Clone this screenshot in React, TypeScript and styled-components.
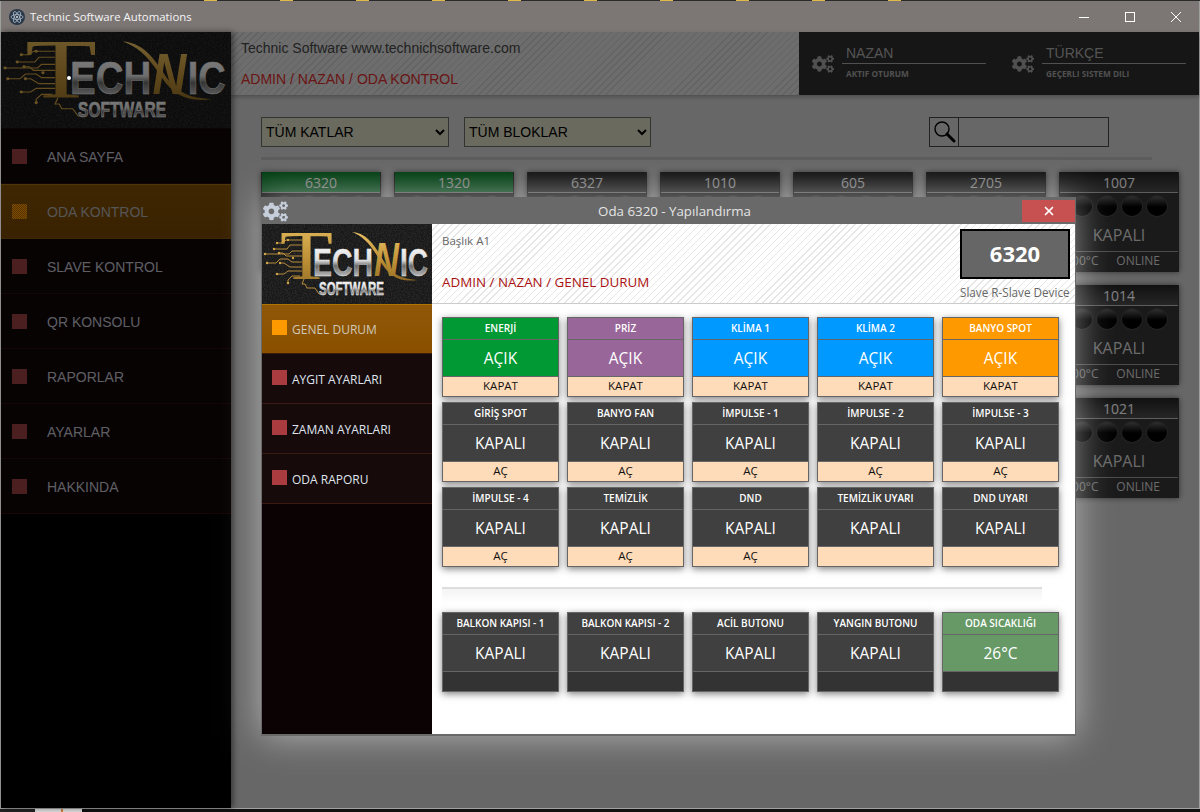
import styled, { createGlobalStyle } from "styled-components";
import { FaCogs } from "react-icons/fa";
import { X } from "lucide-react";

type Tone = "green" | "purple" | "blue" | "orange" | "dark" | "temp";

const toneColors: Record<Tone, string> = {
  green: "#009933",
  purple: "#996699",
  blue: "#0099ff",
  orange: "#ff9900",
  dark: "#404040",
  temp: "#669966",
};

const navItems = ["ANA SAYFA", "ODA KONTROL", "SLAVE KONTROL", "QR KONSOLU", "RAPORLAR", "AYARLAR", "HAKKINDA"];
const modalItems = ["GENEL DURUM", "AYGIT AYARLARI", "ZAMAN AYARLARI", "ODA RAPORU"];

const rooms = [
  { no: "6320", on: true },
  { no: "1320", on: true },
  { no: "6327" },
  { no: "1010" },
  { no: "605" },
  { no: "2705" },
  { no: "1007" },
  { no: "1014", last: true },
  { no: "1021", last: true },
];

const controls: { title: string; value: string; action?: string; tone: Tone }[] = [
  { title: "ENERJİ", value: "AÇIK", action: "KAPAT", tone: "green" },
  { title: "PRİZ", value: "AÇIK", action: "KAPAT", tone: "purple" },
  { title: "KLİMA 1", value: "AÇIK", action: "KAPAT", tone: "blue" },
  { title: "KLİMA 2", value: "AÇIK", action: "KAPAT", tone: "blue" },
  { title: "BANYO SPOT", value: "AÇIK", action: "KAPAT", tone: "orange" },
  { title: "GİRİŞ SPOT", value: "KAPALI", action: "AÇ", tone: "dark" },
  { title: "BANYO FAN", value: "KAPALI", action: "AÇ", tone: "dark" },
  { title: "İMPULSE - 1", value: "KAPALI", action: "AÇ", tone: "dark" },
  { title: "İMPULSE - 2", value: "KAPALI", action: "AÇ", tone: "dark" },
  { title: "İMPULSE - 3", value: "KAPALI", action: "AÇ", tone: "dark" },
  { title: "İMPULSE - 4", value: "KAPALI", action: "AÇ", tone: "dark" },
  { title: "TEMİZLİK", value: "KAPALI", action: "AÇ", tone: "dark" },
  { title: "DND", value: "KAPALI", action: "AÇ", tone: "dark" },
  { title: "TEMİZLİK UYARI", value: "KAPALI", action: "", tone: "dark" },
  { title: "DND UYARI", value: "KAPALI", action: "", tone: "dark" },
];

const sensors: { title: string; value: string; tone: Tone }[] = [
  { title: "BALKON KAPISI - 1", value: "KAPALI", tone: "dark" },
  { title: "BALKON KAPISI - 2", value: "KAPALI", tone: "dark" },
  { title: "ACİL BUTONU", value: "KAPALI", tone: "dark" },
  { title: "YANGIN BUTONU", value: "KAPALI", tone: "dark" },
  { title: "ODA SICAKLIĞI", value: "26°C", tone: "temp" },
];

const circuit = [
  "M40 16H24l-3 3h-6",
  "M40 21H28l-3 4H12",
  "M40 27H30l-3 3H3",
  "M40 32H24l-3-3h-4",
  "M40 38H30l-4-3H18l-4 4H5",
  "M40 43H28l-6-4h-4",
  "M40 47H26l-4 3h-7",
  "M38 52H30l-4 4v3",
  "M42 55l-2 5h3l2 4h8l4 6h6",
];

const dots: [number, number][] = [
  [15, 19], [12, 25], [3, 30], [17, 29], [5, 39], [18, 39], [15, 50], [26, 59], [26, 16], [31, 34],
];

const Logo = () => (
  <LogoSvg viewBox="0 0 170 80" preserveAspectRatio="none" role="img" aria-label="Technic Software">
    <defs>
      <filter id="leather" x="0" y="0" width="100%" height="100%">
        <feTurbulence type="fractalNoise" baseFrequency="0.75" numOctaves="2" seed="4" />
        <feColorMatrix values="0 0 0 0 1  0 0 0 0 1  0 0 0 0 1  0.9 0 0 0 -0.32" />
      </filter>
      <linearGradient id="gold" x1="0" y1="0" x2="0" y2="1">
        <stop offset="0" stopColor="#eac163" />
        <stop offset="0.55" stopColor="#bd8f36" />
        <stop offset="1" stopColor="#8d6a24" />
      </linearGradient>
      <linearGradient id="chrome" x1="0" y1="0" x2="0" y2="1">
        <stop offset="0" stopColor="#ffffff" />
        <stop offset="0.45" stopColor="#dcdcdc" />
        <stop offset="0.58" stopColor="#6a6a6a" />
        <stop offset="1" stopColor="#f6f6f6" />
      </linearGradient>
    </defs>
    <rect width="170" height="80" fill="#181818" />
    <rect width="170" height="80" filter="url(#leather)" opacity="0.22" />
    <g fill="none" stroke="#c79a3f" strokeWidth="0.9">
      {circuit.map((d) => (
        <path key={d} d={d} />
      ))}
    </g>
    {dots.map(([cx, cy]) => (
      <circle key={`${cx}-${cy}`} cx={cx} cy={cy} r="1.2" fill="#d3a748" />
    ))}
    <text x="18" y="55" fontFamily="'Liberation Serif', serif" fontSize="70" textLength="53" lengthAdjust="spacingAndGlyphs" fill="url(#gold)">
      T
    </text>
    <text x="51" y="52" fontFamily="'Liberation Sans', sans-serif" fontWeight="700" fontSize="39" textLength="60" lengthAdjust="spacingAndGlyphs" fill="url(#chrome)" stroke="#e8e8e8" strokeWidth="0.4">
      ECH
    </text>
    <path d="M90 8c14 1 22 12 30 26s16 21 36 22c-20 3-30-5-39-21S100 12 90 8z" fill="url(#gold)" />
    <text x="112" y="52" fontFamily="'Liberation Sans', sans-serif" fontStyle="italic" fontWeight="700" fontSize="48" textLength="25" lengthAdjust="spacingAndGlyphs" fill="url(#gold)">
      N
    </text>
    <text x="138" y="52" fontFamily="'Liberation Sans', sans-serif" fontWeight="700" fontSize="39" textLength="28" lengthAdjust="spacingAndGlyphs" fill="url(#chrome)" stroke="#e8e8e8" strokeWidth="0.4">
      IC
    </text>
    <text x="57" y="71" fontFamily="'Liberation Sans', sans-serif" fontWeight="700" fontSize="18" textLength="65" lengthAdjust="spacingAndGlyphs" fill="url(#chrome)" stroke="#f0f0f0" strokeWidth="0.5">
      SOFTWARE
    </text>
  </LogoSvg>
);

const AppIcon = () => (
  <svg width="16" height="16" viewBox="0 0 16 16">
    <circle cx="8" cy="8" r="8" fill="#2b3848" />
    <g fill="none" stroke="#b8c8d8" strokeWidth="0.7">
      <ellipse cx="8" cy="8" rx="6" ry="2.4" />
      <ellipse cx="8" cy="8" rx="6" ry="2.4" transform="rotate(60 8 8)" />
      <ellipse cx="8" cy="8" rx="6" ry="2.4" transform="rotate(120 8 8)" />
    </g>
    <circle cx="8" cy="8" r="1" fill="#d8e4f0" />
  </svg>
);

const SearchIcon = () => (
  <svg width="26" height="26" viewBox="0 0 26 26">
    <circle cx="11" cy="10" r="7" fill="none" stroke="#000" strokeWidth="1.4" />
    <path d="M16 15l7 7" stroke="#000" strokeWidth="3" strokeLinecap="round" />
  </svg>
);

const App = () => {
  return (
    <Page>
      <GlobalStyle />
      <DesktopTop />
      <Window>
        <TitleBar>
          <AppIcon />
          <AppTitle>Technic Software Automations</AppTitle>
          <WindowButtons>
            <WindowButton aria-label="Küçült">
              <svg width="10" height="10" viewBox="0 0 10 10">
                <path d="M0 5.5h10" stroke="#fff" />
              </svg>
            </WindowButton>
            <WindowButton aria-label="Büyüt">
              <svg width="10" height="10" viewBox="0 0 10 10">
                <rect x="0.5" y="0.5" width="9" height="9" fill="none" stroke="#fff" />
              </svg>
            </WindowButton>
            <WindowButton aria-label="Kapat">
              <svg width="10" height="10" viewBox="0 0 10 10">
                <path d="M0 0l10 10M10 0L0 10" stroke="#fff" />
              </svg>
            </WindowButton>
          </WindowButtons>
        </TitleBar>
        <Body>
          <Sidebar>
            <SideLogo>
              <Logo />
            </SideLogo>
            {navItems.map((item) => (
              <NavItem key={item} $active={item === "ODA KONTROL"}>
                <NavSquare $active={item === "ODA KONTROL"} />
                {item}
              </NavItem>
            ))}
          </Sidebar>
          <Content>
            <Header>
              <HeaderInfo>
                <SiteName>Technic Software www.technichsoftware.com</SiteName>
                <Breadcrumb>ADMIN / NAZAN / ODA KONTROL</Breadcrumb>
              </HeaderInfo>
              <UserPanel>
                <UserBlock>
                  <FaCogs size={22} color="#a0a0a0" />
                  <UserText>
                    <UserName>NAZAN</UserName>
                    <UserSub>AKTIF OTURUM</UserSub>
                  </UserText>
                </UserBlock>
                <UserBlock>
                  <FaCogs size={22} color="#a0a0a0" />
                  <UserText>
                    <UserName>TÜRKÇE</UserName>
                    <UserSub>GEÇERLI SISTEM DILI</UserSub>
                  </UserText>
                </UserBlock>
              </UserPanel>
            </Header>
            <Main>
              <Filters>
                <FilterSelect $width={188} defaultValue="kat">
                  <option value="kat">TÜM KATLAR</option>
                </FilterSelect>
                <FilterSelect $width={187} defaultValue="blok">
                  <option value="blok">TÜM BLOKLAR</option>
                </FilterSelect>
                <SearchBox>
                  <SearchButton>
                    <SearchIcon />
                  </SearchButton>
                  <SearchInput />
                </SearchBox>
              </Filters>
              <Rule />
              <RoomGrid>
                {rooms.map((room) => (
                  <RoomCard key={room.no} $last={room.last}>
                    <RoomNo $on={room.on}>{room.no}</RoomNo>
                    <Leds>
                      <Led />
                      <Led />
                      <Led />
                      <Led />
                    </Leds>
                    <RoomState>KAPALI</RoomState>
                    <RoomFoot>
                      <span>0.00°C</span>
                      <span>ONLINE</span>
                    </RoomFoot>
                  </RoomCard>
                ))}
              </RoomGrid>
            </Main>
          </Content>
        </Body>
      </Window>
      <DesktopBottom />
      <Overlay />
      <CursorDot />
      <Modal>
        <ModalTitle>
          <FaCogs size={25} color="#c6cedb" />
          <ModalTitleText>Oda 6320 - Yapılandırma</ModalTitleText>
          <ModalClose aria-label="Kapat">
            <X size={14} strokeWidth={3} color="#fff" />
          </ModalClose>
        </ModalTitle>
        <ModalHead>
          <ModalLogo>
            <Logo />
          </ModalLogo>
          <ModalHeadInfo>
            <ModalCaption>
              <ModalHeading>Başlık A1</ModalHeading>
              <ModalCrumb>ADMIN / NAZAN / GENEL DURUM</ModalCrumb>
            </ModalCaption>
            <DeviceBox>
              <DeviceNo>6320</DeviceNo>
              <DeviceLabel>Slave R-Slave Device</DeviceLabel>
            </DeviceBox>
          </ModalHeadInfo>
        </ModalHead>
        <ModalBody>
          <ModalSide>
            {modalItems.map((item) => (
              <ModalNavItem key={item} $active={item === "GENEL DURUM"}>
                <ModalNavSquare $active={item === "GENEL DURUM"} />
                {item}
              </ModalNavItem>
            ))}
          </ModalSide>
          <ModalMain>
            <TileGrid>
              {controls.map((tile) => (
                <Tile key={tile.title}>
                  <TileTitle $tone={tile.tone}>{tile.title}</TileTitle>
                  <TileValue $tone={tile.tone}>{tile.value}</TileValue>
                  <TileAction>{tile.action}</TileAction>
                </Tile>
              ))}
            </TileGrid>
            <Separator />
            <TileGrid>
              {sensors.map((tile) => (
                <Tile key={tile.title}>
                  <TileTitle $tone={tile.tone}>{tile.title}</TileTitle>
                  <TileValue $tone={tile.tone}>{tile.value}</TileValue>
                  <TileAction $empty />
                </Tile>
              ))}
            </TileGrid>
          </ModalMain>
        </ModalBody>
      </Modal>
    </Page>
  );
};

const GlobalStyle = createGlobalStyle`
  html, body {
    margin: 0;
    padding: 0;
    height: 100%;
    overflow: hidden;
    background: #111;
  }
`;

const Page = styled.div`
  position: relative;
  width: 1200px;
  height: 812px;
  display: flex;
  flex-direction: column;
  overflow: hidden;
  font-family: "Liberation Sans", Arial, sans-serif;
`;

const DesktopTop = styled.div`
  height: 1px;
  flex: none;
  background:
    repeating-linear-gradient(90deg, #e0b84a 0 13px, #2a2a2a 13px 76px) 204px 0 / 700px 1px no-repeat,
    #2a2a2a;
`;

const DesktopBottom = styled.div`
  height: 3px;
  flex: none;
  background: linear-gradient(
    90deg,
    #222 0 35px,
    #ddd 35px 61px,
    #d08040 61px 63px,
    #ddd 63px 82px,
    #111 82px
  );
`;

const Window = styled.div`
  flex: 1;
  min-height: 0;
  display: flex;
  flex-direction: column;
  border: 1px solid #a0a0a0;
  border-width: 0 1px 1px 1px;
`;

const TitleBar = styled.div`
  height: 31px;
  flex: none;
  display: flex;
  align-items: center;
  padding-left: 8px;
  background: #7c7674;
`;

const AppTitle = styled.div`
  margin-left: 5px;
  font-family: "Open Sans", sans-serif;
  font-size: 11.4px;
  color: #f4f4f4;
`;

const WindowButtons = styled.div`
  margin-left: auto;
  display: flex;
`;

const WindowButton = styled.div`
  width: 46px;
  height: 31px;
  display: flex;
  align-items: center;
  justify-content: center;
`;

const Body = styled.div`
  flex: 1;
  min-height: 0;
  display: flex;
`;

const Sidebar = styled.nav`
  width: 230px;
  flex: none;
  background: #000;
  box-shadow: 2px 0 6px rgba(0, 0, 0, 0.5);
  position: relative;
  z-index: 1;
`;

const SideLogo = styled.div`
  height: 96px;
  border-bottom: 1px solid #1c0c06;
`;

const ModalLogo = styled.div`
  width: 170px;
  height: 80px;
  flex: none;
`;

const LogoSvg = styled.svg`
  display: block;
  width: 100%;
  height: 100%;
`;

const NavItem = styled.div<{ $active?: boolean }>`
  height: 55px;
  box-sizing: border-box;
  display: flex;
  align-items: center;
  padding: 1px 0 0 11px;
  gap: 20px;
  font-size: 14px;
  color: ${(p) => (p.$active ? "#aaa" : "#bcbdc8")};
  background: ${(p) => (p.$active ? "linear-gradient(#7e4e06, #734400)" : "#100606")};
  border-bottom: 1px solid ${(p) => (p.$active ? "#7e4e06" : "#2a0f0a")};
  box-shadow: ${(p) => (p.$active ? "inset 0 1px 0 #a06a10" : "none")};
`;

const NavSquare = styled.span<{ $active?: boolean }>`
  width: 15px;
  height: 15px;
  flex: none;
  margin-top: -1px;
  background: ${(p) => (p.$active ? "repeating-conic-gradient(#ff9900 0 25%, #a86400 0 50%) 0 0 / 2px 2px" : "#963e40")};
`;

const Content = styled.div`
  flex: 1;
  min-width: 0;
  display: flex;
  flex-direction: column;
  background: #cfcfcf;
`;

const Header = styled.header`
  height: 63px;
  flex: none;
  display: flex;
  box-shadow: 0 2px 4px rgba(0, 0, 0, 0.25);
`;

const HeaderInfo = styled.div`
  flex: 1;
  padding: 8px 10px 0;
  background: repeating-linear-gradient(135deg, #dadada 0 4px, #c6c6c6 4px 5px);
`;

const SiteName = styled.div`
  font-size: 14px;
  color: #444;
`;

const Breadcrumb = styled.div`
  margin-top: 15px;
  font-size: 14px;
  color: #d42c2c;
`;

const UserPanel = styled.div`
  width: 400px;
  flex: none;
  display: flex;
  box-sizing: border-box;
  padding: 9px 0 0 13px;
  gap: 26px;
  background: #2c2c2c;
`;

const UserBlock = styled.div`
  display: flex;
  gap: 8px;
  align-items: flex-start;
  padding-top: 12px;
`;

const UserText = styled.div`
  width: 144px;
  margin-top: -12px;
`;

const UserName = styled.div`
  height: 23px;
  box-sizing: border-box;
  padding: 4px 0 0 4px;
  font-size: 14px;
  color: #a8a8a8;
  border-bottom: 1px solid #a0a0a0;
`;

const UserSub = styled.div`
  padding: 4px 0 0 4px;
  font-family: "Open Sans", sans-serif;
  font-size: 8.3px;
  font-weight: 700;
  white-space: nowrap;
  color: #a0a0a0;
`;

const Main = styled.main`
  flex: 1;
  padding: 22px 0 0 30px;
`;

const Filters = styled.div`
  width: 848px;
  display: flex;
  gap: 15px;
`;

const FilterSelect = styled.select<{ $width: number }>`
  width: ${(p) => p.$width}px;
  height: 30px;
  box-sizing: border-box;
  padding: 0;
  border: 1px solid #666;
  border-radius: 0;
  background: #d4d4bc;
  color: #000;
  font-family: "Liberation Sans", Arial, sans-serif;
  font-size: 14px;
  outline: none;
`;

const SearchBox = styled.div`
  margin-left: auto;
  display: flex;
  height: 30px;
`;

const SearchButton = styled.div`
  width: 30px;
  box-sizing: border-box;
  display: flex;
  align-items: center;
  justify-content: center;
  border: 1px solid #444;
`;

const SearchInput = styled.input`
  width: 150px;
  box-sizing: border-box;
  border: 1px solid #444;
  border-left-width: 0;
  background: transparent;
  outline: none;
`;

const Rule = styled.div`
  width: 891px;
  height: 3px;
  margin-top: 10px;
  background: #b8b8b8;
`;

const RoomGrid = styled.div`
  margin-top: 12px;
  display: grid;
  grid-template-columns: repeat(7, 120px);
  grid-auto-rows: 100px;
  gap: 13px;
`;

const RoomCard = styled.div<{ $last?: boolean }>`
  ${(p) => p.$last && "grid-column: 7;"}
  display: flex;
  flex-direction: column;
  background: #343434;
  box-shadow: 0 0 6px rgba(0, 0, 0, 0.55);
  color: #d6d6d6;
  font-family: "Open Sans", sans-serif;
`;

const RoomNo = styled.div<{ $on?: boolean }>`
  height: 20px;
  flex: none;
  line-height: 21px;
  text-align: center;
  font-size: 14px;
  color: #fff;
  background: ${(p) => (p.$on ? "linear-gradient(#007820, #2c9c50)" : "linear-gradient(#222, #4c4c4c)")};
  border-bottom: 1px solid #bbb;
  margin: 0 1px;
`;

const Leds = styled.div`
  display: flex;
  justify-content: center;
  gap: 5px;
  padding-top: 3px;
`;

const Led = styled.span`
  width: 20px;
  height: 20px;
  border-radius: 50%;
  background: linear-gradient(#606060, #000 55%);
  box-shadow: 0 0 0 1px #444;
`;

const RoomState = styled.div`
  flex: 1;
  display: flex;
  align-items: center;
  justify-content: center;
  padding-top: 2px;
  font-size: 16px;
  color: #d6d6d6;
`;

const RoomFoot = styled.div`
  height: 21px;
  flex: none;
  box-sizing: border-box;
  display: flex;
  align-items: center;
  justify-content: space-between;
  padding: 0 18px 3px 2px;
  border-top: 1px solid #999;
  margin: 0 1px;
  font-size: 12px;
`;

const Overlay = styled.div`
  position: absolute;
  top: 32px;
  left: 1px;
  right: 1px;
  bottom: 4px;
  z-index: 5;
  background: rgba(0, 0, 0, 0.5);
`;

const CursorDot = styled.div`
  position: absolute;
  left: 67px;
  top: 76px;
  width: 4px;
  height: 4px;
  z-index: 6;
  border-radius: 50%;
  background: #fff;
`;

const Modal = styled.div`
  position: absolute;
  left: 261px;
  top: 197px;
  width: 815px;
  height: 539px;
  box-sizing: border-box;
  z-index: 10;
  display: flex;
  flex-direction: column;
  border: 1px solid #696969;
  border-bottom-width: 2px;
  background: #fff;
  font-family: "Open Sans", sans-serif;
  box-shadow: 0 0 34px rgba(255, 255, 255, 0.5);
`;

const ModalTitle = styled.div`
  height: 26px;
  flex: none;
  display: flex;
  align-items: center;
  padding-left: 1px;
  background: #696969;
  color: #e4e4e4;
`;

const ModalTitleText = styled.div`
  flex: 1;
  padding-left: 39px;
  text-align: center;
  font-size: 13.3px;
`;

const ModalClose = styled.div`
  width: 53px;
  height: 22px;
  display: flex;
  align-items: center;
  justify-content: center;
  background: #c75050;
`;

const ModalHead = styled.div`
  height: 80px;
  flex: none;
  display: flex;
`;

const ModalHeadInfo = styled.div`
  flex: 1;
  display: flex;
  justify-content: space-between;
  box-sizing: border-box;
  padding: 5px 5px 0 10px;
  border-bottom: 1px solid #ccc;
  background: repeating-linear-gradient(135deg, #fff 0 4px, #e6e6e6 4px 5px);
`;

const ModalCaption = styled.div``;

const ModalHeading = styled.div`
  margin-top: 4px;
  font-size: 11.5px;
  color: #666;
`;

const ModalCrumb = styled.div`
  margin-top: 25px;
  font-size: 13.4px;
  color: #aa1111;
`;

const DeviceBox = styled.div`
  width: 110px;
`;

const DeviceNo = styled.div`
  height: 50px;
  box-sizing: border-box;
  display: flex;
  align-items: center;
  justify-content: center;
  padding-bottom: 3px;
  border: 2px solid #000;
  background: #666;
  color: #fff;
  font-size: 22px;
  font-weight: 700;
`;

const DeviceLabel = styled.div`
  margin-top: 5px;
  font-size: 11.7px;
  white-space: nowrap;
  color: #666;
`;

const ModalBody = styled.div`
  flex: 1;
  min-height: 0;
  display: flex;
`;

const ModalSide = styled.div`
  width: 170px;
  flex: none;
  background: #0b0204;
`;

const ModalNavItem = styled.div<{ $active?: boolean }>`
  height: 50px;
  box-sizing: border-box;
  display: flex;
  align-items: flex-start;
  gap: 5px;
  padding: 16px 0 0 10px;
  font-size: 12px;
  line-height: 20px;
  color: ${(p) => (p.$active ? "#d0c8b8" : "#dfe4ee")};
  background: ${(p) => (p.$active ? "linear-gradient(#8f5808, #8a5000)" : "#170a0a")};
  box-shadow: ${(p) => (p.$active ? "inset 0 1px 0 #b07400" : "none")};
  border-bottom: 1px solid ${(p) => (p.$active ? "#3a1c08" : "#3a1a12")};
`;

const ModalNavSquare = styled.span<{ $active?: boolean }>`
  width: 15px;
  height: 15px;
  flex: none;
  background: ${(p) => (p.$active ? "#ff9900" : "#aa3c40")};
`;

const ModalMain = styled.div`
  flex: 1;
  padding: 13px 0 0 10px;
  background: #fff;
`;

const TileGrid = styled.div`
  display: grid;
  grid-template-columns: repeat(5, 117px);
  grid-auto-rows: 80px;
  column-gap: 8px;
  row-gap: 5px;
`;

const Tile = styled.div`
  display: flex;
  flex-direction: column;
  box-sizing: border-box;
  border: 1px solid #666;
  box-shadow: 0 2px 7px rgba(0, 0, 0, 0.5);
  background: #666;
`;

const TileTitle = styled.div<{ $tone: Tone }>`
  height: 21px;
  flex: none;
  box-sizing: border-box;
  padding-bottom: 2px;
  display: flex;
  align-items: center;
  justify-content: center;
  font-size: 10px;
  font-weight: 600;
  white-space: nowrap;
  color: #fff;
  background: ${(p) => toneColors[p.$tone]};
`;

const TileValue = styled.div<{ $tone: Tone }>`
  height: 36px;
  flex: none;
  margin-top: 1px;
  display: flex;
  align-items: center;
  justify-content: center;
  font-size: 15.5px;
  color: #fff;
  background: ${(p) => toneColors[p.$tone]};
`;

const TileAction = styled.div<{ $empty?: boolean }>`
  height: 19px;
  flex: none;
  box-sizing: border-box;
  padding-bottom: 3px;
  margin-top: 1px;
  display: flex;
  align-items: center;
  justify-content: center;
  font-size: 11.5px;
  color: #111;
  background: ${(p) => (p.$empty ? "#333" : "#ffdcb9")};
`;

const Separator = styled.div`
  width: 600px;
  height: 14px;
  margin: 20px 0 9px;
  border-top: 2px solid #ddd;
  background: linear-gradient(#f4f4f4, #fff);
`;

export default App;
